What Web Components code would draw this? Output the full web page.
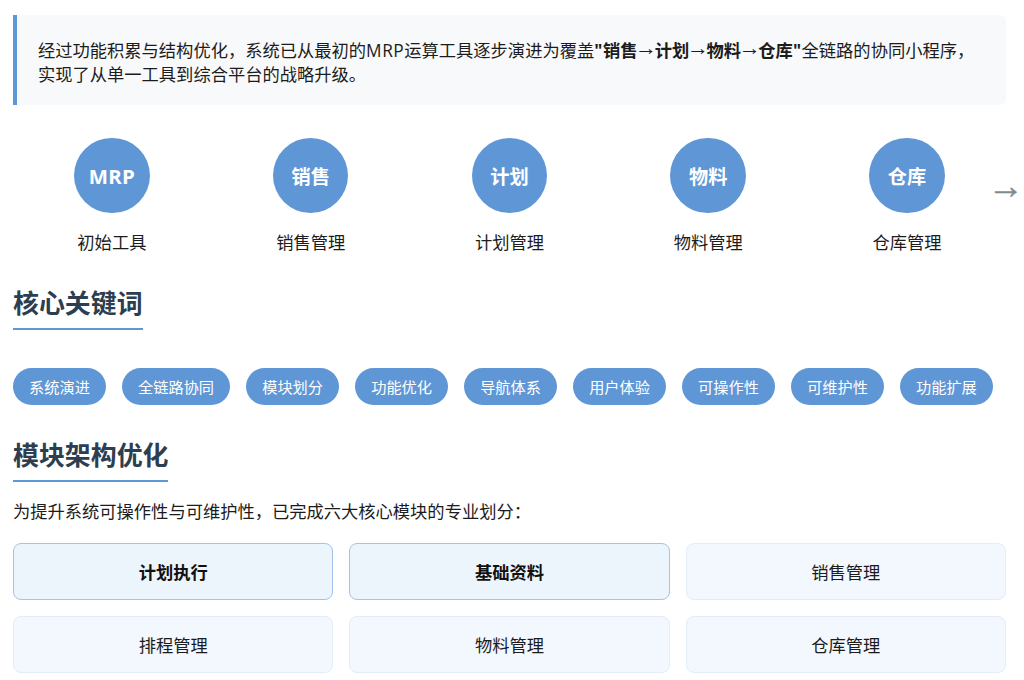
<!DOCTYPE html>
<html lang="zh"><head><meta charset="utf-8">
<style>
html,body{margin:0;padding:0;background:#fff;overflow:hidden;height:680px}
body{font-family:"Noto Sans CJK SC","Noto Sans",sans-serif;font-size:17.28px;color:#1c1c1c}
</style></head><body>
<app-page>
<intro-note>经过功能积累与结构优化，系统已从最初的<latin-term>MRP</latin-term>运算工具逐步演进为覆盖<b><latin-term>"</latin-term>销售<thin-arrow>→</thin-arrow>计划<thin-arrow>→</thin-arrow>物料<thin-arrow>→</thin-arrow>仓库<latin-term>"</latin-term></b>全链路的协同小程序，实现了从单一工具到综合平台的战略升级。</intro-note>
<flow-row>
<flow-step mark="MRP" latin>初始工具</flow-step>
<flow-step mark="销售">销售管理</flow-step>
<flow-step mark="计划">计划管理</flow-step>
<flow-step mark="物料">物料管理</flow-step>
<flow-step mark="仓库" arrow>仓库管理</flow-step>
</flow-row>
<section-title>核心关键词</section-title>
<tag-list>
<key-tag>系统演进</key-tag><key-tag>全链路协同</key-tag><key-tag>模块划分</key-tag><key-tag>功能优化</key-tag><key-tag>导航体系</key-tag><key-tag>用户体验</key-tag><key-tag>可操作性</key-tag><key-tag>可维护性</key-tag><key-tag>功能扩展</key-tag>
</tag-list>
<section-title second>模块架构优化</section-title>
<lead-text>为提升系统可操作性与可维护性，已完成六大核心模块的专业划分：</lead-text>
<module-grid>
<module-card strong>计划执行</module-card><module-card strong>基础资料</module-card><module-card>销售管理</module-card>
<module-card>排程管理</module-card><module-card>物料管理</module-card><module-card>仓库管理</module-card>
</module-grid>
</app-page>
<script>
function def(name,css,html){
  customElements.define(name,class extends HTMLElement{
    constructor(){super();const r=this.attachShadow({mode:"open"});
      r.innerHTML="<style>"+css+"</style>"+html;}
    connectedCallback(){const m=this.shadowRoot.querySelector(".mark");
      if(m)m.textContent=this.getAttribute("mark");
      const a=this.shadowRoot.querySelector(".arrow");
      if(a&&!this.hasAttribute("arrow"))a.remove();}
  });
}
def("latin-term",`:host{display:inline;font-family:"Open Sans",sans-serif;letter-spacing:.55px;line-height:0}`,"<slot></slot>");
def("thin-arrow",`:host{display:inline;font-family:"Liberation Sans",sans-serif;font-weight:400;font-size:22px;letter-spacing:-2.36px;margin-left:-2.36px;line-height:0;vertical-align:2px}`,"<slot></slot>");
def("intro-note",`:host{display:block;margin:15px 18px 0 13px;padding:23px 21px 19px 21px;background:#f8f9fa;border-left:4px solid #5f97d6;border-radius:0 6px 6px 0;line-height:24px}`,"<slot></slot>");
def("flow-row",`:host{display:flex;justify-content:space-between;margin:32.7px 18px 0 13px;padding:0 18px 0 17.9px;box-sizing:border-box}`,"<slot></slot>");
def("flow-step",`:host{display:flex;flex-direction:column;align-items:center;position:relative;width:162px}
.mark{box-sizing:border-box;padding-top:1px;width:75.6px;height:75.6px;border-radius:50%;background:#5f97d6;color:#fff;font-weight:700;font-size:19.2px;display:flex;align-items:center;justify-content:center}
:host([latin]) .mark{font-family:"Open Sans",sans-serif;font-size:20.4px;letter-spacing:.2px}
.label{margin-top:15.7px;line-height:26px}
.arrow{position:absolute;left:162px;top:34px;font-family:"Liberation Sans",sans-serif;font-weight:700;font-size:36px;line-height:28px;color:#7f8c8d;-webkit-text-stroke:.5px #7f8c8d}`,
`<div class="mark"></div><div class="label"><slot></slot></div><div class="arrow">→</div>`);
def("section-title",`:host{display:block;margin:30px 0 0 13px}
:host([second]){margin-top:32px}
h2{display:inline-block;margin:0;font-size:25.92px;line-height:34px;font-weight:700;color:#2c3e50;padding-bottom:9px;border-bottom:2px solid #5f97d6}`,"<h2><slot></slot></h2>");
def("tag-list",`:host{display:flex;flex-wrap:wrap;gap:16px;margin:38px 18px 0 13px}`,"<slot></slot>");
def("key-tag",`:host{display:block;height:37px;line-height:37px;padding:0 16.12px;border-radius:19px;background:#5f97d6;color:#fff;font-size:15.2px}`,"<slot></slot>");
def("lead-text",`:host{display:block;margin:16px 18px 0 13px;line-height:26px}`,"<slot></slot>");
def("module-grid",`:host{display:grid;grid-template-columns:repeat(3,1fr);gap:16px;margin:19px 18px 0 13px}`,"<slot></slot>");
def("module-card",`:host{display:flex;align-items:center;justify-content:center;box-sizing:border-box;height:57px;border:1px solid #e3edf9;border-radius:8px;background:#f3f7fe}
:host([strong]){font-weight:700;border-color:#a3c3e8;background:#ecf4fc;color:#111}`,"<slot></slot>");
def("app-page",`:host{display:block}`,"<slot></slot>");
</script>
</body></html>
